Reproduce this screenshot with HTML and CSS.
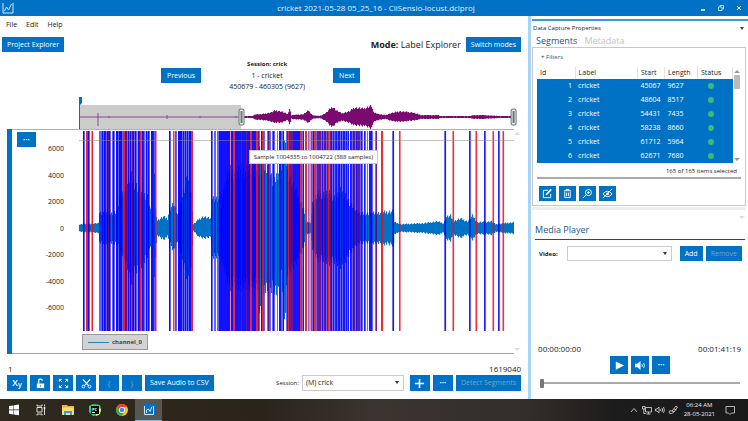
FILE: index.html
```html
<!DOCTYPE html>
<html lang="en">
<head>
<meta charset="utf-8">
<title>cricket 2021-05-28 05_25_16 - CliSensio-locust.dclproj</title>
<link rel="stylesheet" href="styles.css">
</head>
<body>

<header class="titlebar">
	<svg class="logo" viewBox="0 0 12 12"><path d="M1 1v10h10V1M2.5 9l2-4 2 3 3-6"/></svg>
	<h1>cricket 2021-05-28 05_25_16 - CliSensio-locust.dclproj</h1>
	<div class="window-buttons">
		<button aria-label="Minimize"><svg viewBox="0 0 8 8"><path d="M2 6h4" stroke-width="1.5"/></svg></button>
		<button aria-label="Restore"><svg viewBox="0 0 8 8"><path d="M1.5 3h3.5v3.5H1.5zM3 3V1.5h3.5V5H5" stroke-width=".7"/></svg></button>
		<button aria-label="Close"><svg viewBox="0 0 8 8"><path d="M2 2l4 4M6 2L2 6"/></svg></button>
	</div>
</header>

<div class="workspace">
	<main class="explorer">
		<nav class="menu">
			<button>File</button>
			<button>Edit</button>
			<button>Help</button>
		</nav>

		<div class="mode-row">
			<button class="btn">Project Explorer</button>
			<div class="mode"><b>Mode:</b> Label Explorer</div>
			<button class="btn">Switch modes</button>
		</div>

		<div class="session-row">
			<button class="btn">Previous</button>
			<div class="session-info">
				<b>Session: crick</b>
				<span>1 - cricket</span>
				<span>450679 - 460305 (9627)</span>
			</div>
			<button class="btn">Next</button>
		</div>

		<svg class="overview" viewBox="0 0 440 32" preserveAspectRatio="none">
			<rect class="dim" x="0" y="8" width="162" height="24"/>
			<path id="overviewWave"/>
			<path class="rest" d="M0 20h162M19 16v13M30 19v2M88 18v4M121 19v2M157 19v2"/>
			<path class="flag" d="M0 0h3v6l-2 2v24H0z"/>
			<g class="grip">
				<rect x="160" y="12" width="5" height="16" rx="2"/>
				<path d="M162 14v12M163 14v12"/>
				<rect x="432" y="12" width="5" height="16" rx="2"/>
				<path d="M434 14v12M435 14v12"/>
			</g>
		</svg>

		<section class="chart">
			<div class="channel"></div>
			<div class="axis-col">
				<button class="btn dots" aria-label="Chart options">•••</button>
				<div class="axis">
					<span>6000</span><span>4000</span><span>2000</span><span>0</span>
					<span>-2000</span><span>-4000</span><span>-6000</span>
				</div>
			</div>
			<div class="plot-col">
				<div class="plot">
					<svg viewBox="0 0 435 200" preserveAspectRatio="none">
						<path id="wave"/>
						<g id="bars"></g>
						<path class="limit" d="M0 9.5h435"/>
					</svg>
					<div class="tooltip">Sample 1004335 to 1004722 (388 samples)</div>
				</div>
				<div class="legend"><i></i>channel_0</div>
			</div>
			<div class="scroll-hints"><i class="tri up"></i><i class="tri"></i></div>
		</section>

		<div class="samples"><span>1</span><span>1619040</span></div>

		<div class="toolbar">
			<button class="btn icon xy" aria-label="Axes">X<small>y</small></button>
			<button class="btn icon" aria-label="Unlock"><svg viewBox="0 0 12 12"><path class="fill" d="M2 6h8v5H2z"/><path d="M4 6V3.5a2 2 0 0 1 4-.5" stroke-width="1.5"/><path d="M6 8v1.5" stroke="#0072c6"/></svg></button>
			<button class="btn icon" aria-label="Fit"><svg viewBox="0 0 12 12"><path d="M1.5 4V1.5H4M8 1.5h2.5V4M10.5 8v2.5H8M4 10.5H1.5V8M2 2l2.5 2.5M10 2L7.5 4.5M10 10L7.5 7.5M2 10l2.5-2.5"/></svg></button>
			<button class="btn icon" aria-label="Cut"><svg viewBox="0 0 12 12"><path d="M2 1.5l6.5 7M10 1.5l-6.5 7" stroke-width="1.3"/><circle cx="2.7" cy="9.3" r="1.5"/><circle cx="9.3" cy="9.3" r="1.5"/></svg></button>
			<button class="btn icon brace" disabled>{</button>
			<button class="btn icon brace" disabled>}</button>
			<button class="btn">Save Audio to CSV</button>
			<label class="session-label" for="session">Session:</label>
			<span class="select session-select"><select id="session"><option>(M) crick</option></select></span>
			<button class="btn icon" aria-label="Add session"><svg viewBox="0 0 12 12"><path d="M6 1v10M1 6h10" stroke-width="1.7"/></svg></button>
			<button class="btn icon dots" aria-label="More">•••</button>
			<button class="btn" disabled>Detect Segments</button>
		</div>
	</main>

	<aside class="dock">
		<div class="dock-title">Data Capture Properties<i class="tri dark"></i></div>
		<div class="tabs">
			<button class="active">Segments</button>
			<button>Metadata</button>
		</div>
		<section class="segments">
			<button class="filters"><b>+</b> Filters</button>
			<div class="table-wrap">
				<table>
					<colgroup><col class="c-id"><col><col class="c-start"><col class="c-length"><col class="c-status"></colgroup>
					<thead><tr><th>Id</th><th>Label</th><th>Start</th><th>Length</th><th>Status</th></tr></thead>
					<tbody>
						<tr><td>1</td><td>cricket</td><td>45067</td><td>9627</td><td><i class="ok"></i></td></tr>
						<tr><td>2</td><td>cricket</td><td>48604</td><td>8517</td><td><i class="ok"></i></td></tr>
						<tr><td>3</td><td>cricket</td><td>54431</td><td>7435</td><td><i class="ok"></i></td></tr>
						<tr><td>4</td><td>cricket</td><td>58238</td><td>8660</td><td><i class="ok"></i></td></tr>
						<tr><td>5</td><td>cricket</td><td>61712</td><td>5964</td><td><i class="ok"></i></td></tr>
						<tr><td>6</td><td>cricket</td><td>62671</td><td>7680</td><td><i class="ok"></i></td></tr>
					</tbody>
				</table>
				<div class="scrollbar"><i class="tri up"></i><i class="thumb"></i><i class="tri"></i></div>
			</div>
			<div class="count">165 of 165 items selected</div>
			<div class="actions">
				<button class="btn icon" aria-label="Edit"><svg viewBox="0 0 12 12"><path d="M9.5 6.5v4h-8v-8h5"/><path d="M4.5 7.5l5.5-6" stroke-width="1.8"/></svg></button>
				<button class="btn icon" aria-label="Delete"><svg viewBox="0 0 12 12"><path d="M2 3h8M4.5 3V1.5h3V3M3 4v6.5h6V4M5 5v4M7 5v4"/></svg></button>
				<button class="btn icon" aria-label="Zoom to segment"><svg viewBox="0 0 12 12"><circle cx="7" cy="5" r="3.3"/><path d="M4.5 7.5l-3.5 3.5M5.5 5h3M7 3.5v3"/></svg></button>
				<button class="btn icon" aria-label="Hide"><svg viewBox="0 0 12 12"><path d="M1 6.5q5-6 10 0q-5 6-10 0zM1 11L11 1"/><circle class="fill" cx="6" cy="6.5" r="1.5"/></svg></button>
			</div>
		</section>

		<div class="splitter"></div>
		<i class="tri panel-arrow"></i>

		<section class="player">
			<h2>Media Player</h2>
			<div class="video-row">
				<label for="video">Video:</label>
				<span class="select"><select id="video"><option></option></select></span>
				<button class="btn">Add</button>
				<button class="btn" disabled>Remove</button>
			</div>
			<div class="times"><span>00:00:00:00</span><span>00:01:41:19</span></div>
			<div class="transport">
				<button class="btn" aria-label="Play"><svg viewBox="0 0 12 12"><path class="fill" d="M2 1.5l9 4.5-9 4.5z"/></svg></button>
				<button class="btn" aria-label="Volume"><svg viewBox="0 0 12 12"><path class="fill" d="M0 4h2.5L6 1v10L2.5 8H0z"/><path d="M7.5 4.5q1 1.5 0 3M9.5 3.5q1.5 2.5 0 5"/></svg></button>
				<button class="btn dots" aria-label="More">•••</button>
			</div>
			<input class="seek" type="range" min="0" max="100" value="0" aria-label="Position">
		</section>
	</aside>
</div>

<footer class="taskbar">
	<button class="task" aria-label="Start"><svg viewBox="0 0 14 14"><path fill="#fff" d="M2 3l4.5-.6v4.2H2zM7 2.3l5-.7v5H7zM2 7.2h4.5v4.2L2 10.8zM7 7.2h5v5l-5-.7z"/></svg></button>
	<button class="task" aria-label="Task view"><svg viewBox="0 0 14 14"><path fill="none" stroke="#ddd" d="M3 4.5h5v4.5H3zM3 1.5v1.5h5V1.5M3 12.5V11h5v1.5M10.5 1.5v2M10.5 6v6"/><path fill="#fff" d="M9.7 4h1.6v2H9.7z"/></svg></button>
	<button class="task" aria-label="File Explorer"><svg viewBox="0 0 14 14"><path fill="#e8b339" d="M1 2h5l1 1h6v3H1z"/><path fill="#fbdc7b" d="M1 4.5h12v7.5H1z"/><path fill="#3f9bdc" d="M3 8h8v4H9V10H5v2H3z"/></svg></button>
	<button class="task" aria-label="PyCharm"><svg viewBox="0 0 14 14"><path fill="#21d789" d="M1 3l4-2 7 1 1 5-2 5-6 1-4-4z"/><path fill="#fcf84a" d="M9 4l4 2-1 5-4 2z"/><path fill="#07c3f2" d="M9 1l4 3-3 1z"/><path fill="#000" d="M3 3h8v8H3z"/><text x="4" y="7.5">PC</text><path fill="#fff" d="M4 9h3v1H4z"/></svg></button>
	<button class="task" aria-label="Chrome"><svg viewBox="0 0 14 14"><circle cx="7" cy="7" r="6" fill="#fbc116"/><path fill="#ea4335" d="M1.8 4A6 6 0 0 1 12.2 4L7 4.2 4.6 8.4z"/><path fill="#34a853" d="M1.8 4A6 6 0 0 0 6.5 13l3-4.6H4.5z"/><circle cx="7" cy="7" r="3" fill="#fff"/><circle cx="7" cy="7" r="2.3" fill="#4285f4"/></svg></button>
	<button class="task running" aria-label="CliSensio"><svg viewBox="0 0 14 14"><path fill="#0072c6" d="M1 1h12v12H1z"/><path fill="none" stroke="#cde6f7" d="M2.5 3v8.5h9V3M4.5 10V7l2-1 1.5 2.5 2-5"/></svg></button>
	<div class="tray">
		<svg viewBox="0 0 10 10"><path d="M2 7l3-3.5L8 7"/></svg>
		<svg viewBox="0 0 10 10"><path d="M3.5 2.5h6v4.5h-6zM4.5 9h4M6.5 7v2M.5 1.5h2.5v2.5H.5zM1.8 4v4.5h2"/></svg>
		<svg viewBox="0 0 10 10"><path d="M.5 4h1.5l2-2v6l-2-2H.5zM5.5 4q.7 1 0 2M7 3q1.2 2 0 4M8.5 2q1.7 3 0 6"/></svg>
		<svg viewBox="0 0 10 10"><path d="M4 6l4-5 1.5 1L6 7zM4 6q-3-1-3 1t2.5 1.5T6 6M6 4l2.5 1"/></svg>
		<time>06:24 AM<br>28-05-2021</time>
		<svg viewBox="0 0 10 10"><path d="M1 1.5h8.5v6.5H6.5L5 9.5 3.5 8H1z"/></svg>
	</div>
</footer>

<script src="script.js"></script>
</body>
</html>
```
FILE: styles.css
```css
* {
	box-sizing: border-box;
}
body {
	margin: 0;
	min-height: 100vh;
	display: flex;
	flex-direction: column;
	font: 7px/12px "Open Sans", "Noto Sans", sans-serif;
	color: #222;
	background: #fff;
}
button, select {
	font: inherit;
	color: inherit;
	border: 0;
	padding: 0;
	background: none;
}
svg {
	display: block;
	fill: none;
}

/* shared controls */
.btn {
	height: 15px;
	padding: 0 5px;
	background: #0072c6;
	color: #fff;
	font-weight: 500;
	white-space: nowrap;
	display: flex;
	align-items: center;
	justify-content: center;
}
.btn:disabled {
	color: #7aa3c6;
}
.btn svg {
	width: 11px;
	height: 11px;
	stroke: #fff;
}
.btn .fill {
	fill: #fff;
	stroke: none;
}
.btn.dots {
	font-size: 6px;
}
.select {
	display: flex;
	position: relative;
	height: 15px;
}
.select select {
	appearance: none;
	width: 100%;
	padding: 0 3px;
	border: 1px solid #ccc;
	background: #fff;
}
.select::after {
	content: "";
	position: absolute;
	right: 5px;
	top: 6px;
	border: 2px solid transparent;
	border-top: 3px solid #333;
	border-bottom: 0;
}
.tri {
	width: 0;
	height: 0;
	border: 3px solid transparent;
	border-top: 3px solid #ddd;
	border-bottom: 0;
}
.tri.up {
	border-top: 0;
	border-bottom: 3px solid #ddd;
}
.tri.dark {
	border-width: 3px 2px 0;
	border-top-color: #444;
}

/* title bar */
.titlebar {
	height: 16px;
	background: #0072c6;
	display: flex;
	align-items: center;
	justify-content: space-between;
	color: #fff;
}
.titlebar h1 {
	margin: 0;
	font-size: 8px;
	font-weight: 400;
	color: #e3eff9;
}
.logo {
	width: 12px;
	height: 12px;
	margin: 0 39px 0 2px;
	stroke: #d6e9f8;
}
.window-buttons {
	display: flex;
	gap: 10px;
	padding-right: 5px;
}
.window-buttons svg {
	width: 8px;
	height: 8px;
	stroke: #fff;
}

/* main area */
.workspace {
	flex: 1;
	display: flex;
}
.explorer {
	flex: 1;
	min-width: 0;
	display: flex;
	flex-direction: column;
	padding-right: 7px;
}
.menu {
	display: flex;
	gap: 9px;
	padding: 3px 6px 6px;
}
.mode-row {
	display: flex;
	align-items: center;
	gap: 5px;
	padding-left: 2px;
}
.mode {
	margin-left: auto;
	font-size: 9px;
}
.session-row {
	display: flex;
	align-items: center;
	padding: 7px 0 5px 161px;
}
.session-info {
	width: 132px;
	display: flex;
	flex-direction: column;
	align-items: center;
	line-height: 11px;
}
.session-info b {
	font-size: 6px;
}
.session-row .btn {
	padding: 0 6px;
}
.overview {
	width: calc(100% - 81px);
	height: 32px;
	margin-left: 79px;
}
.overview .dim {
	fill: #ccc;
}
#overviewWave {
	fill: #7b0a70;
}
.overview .rest {
	stroke: #8a4a88;
}
.overview .flag {
	fill: #0072c6;
}
.grip {
	fill: #e8ecec;
	stroke: #68777a;
}

/* chart */
.chart {
	flex: 1;
	display: flex;
	margin-left: 7px;
}
.channel {
	width: 5px;
	background: #0072c6;
}
.axis-col, .plot-col {
	border-top: 1px solid #9ab8cc;
	border-bottom: 1px solid #8ba9c4;
	display: flex;
	flex-direction: column;
}
.axis-col {
	width: 67px;
	padding: 2px 15px 39px 5px;
}
.axis-col .btn {
	width: 19px;
	padding: 0;
	align-self: flex-start;
}
.axis {
	flex: 1;
	margin-top: -4px;
	display: flex;
	flex-direction: column;
	justify-content: space-between;
	text-align: right;
}
.plot-col {
	flex: 1;
}
.plot {
	flex: 1;
	position: relative;
	display: flex;
	min-height: 100px;
	margin-top: 1px;
}
.plot > svg {
	flex: 1;
	width: 100%;
	min-width: 0;
	height: 100%;
}
#wave {
	fill: #0072c6;
}
.limit {
	stroke: #888;
	stroke-opacity: .5;
}
.bar-B { fill: #00f; fill-opacity: .96; }
.bar-b { fill: #1010f0; fill-opacity: .65; }
.bar-P { fill: #5a0090; fill-opacity: .95; }
.bar-R { fill: #e80c18; fill-opacity: .92; }
.bar-r { fill: #f01830; fill-opacity: .5; }
.tooltip {
	position: absolute;
	left: 39%;
	top: 19px;
	padding: 0 4px;
	background: #fff;
	border: 1px solid #ccc;
	font-size: 6px;
	white-space: nowrap;
}
.legend {
	align-self: flex-start;
	display: flex;
	align-items: center;
	gap: 3px;
	margin: 3px 0 3px 3px;
	padding: 1px 5px;
	border: 1px solid #999;
	background: #d3d3d3;
	font-size: 6px;
	font-weight: 700;
	color: #444;
}
.legend i {
	width: 21px;
	height: 1px;
	background: #1f83cc;
}
.scroll-hints {
	width: 7px;
	padding: 3px 0;
	display: flex;
	flex-direction: column;
	justify-content: space-between;
}
.samples {
	display: flex;
	justify-content: space-between;
	padding: 9px 0 0 8px;
	font-size: 8px;
}
.toolbar {
	display: flex;
	align-items: center;
	gap: 3px;
	padding: 0 0 8px 7px;
}
.toolbar .btn, .toolbar .select {
	height: 16px;
}
.toolbar .btn.icon {
	width: 20px;
	padding: 0;
}
.toolbar .xy {
	font-size: 9px;
	font-weight: 600;
}
.toolbar .brace {
	font-size: 8px;
}
.xy small {
	font-size: 7px;
	padding-top: 3px;
}
.session-label {
	margin-left: auto;
	font-size: 6px;
}
.session-select {
	width: 102px;
	margin-right: 3px;
}

/* right dock */
.dock {
	width: 29%;
	box-sizing: content-box;
	border-left: 3px solid #a5d5f7;
	display: flex;
	flex-direction: column;
}
.dock-title {
	margin: 3px 0 0 1px;
	padding: 1px 4px 0 1px;
	border-top: 2px solid #3a9bd6;
	font-size: 6px;
	display: flex;
	align-items: center;
	justify-content: space-between;
}
.tabs {
	display: flex;
	gap: 7px;
	padding-left: 5px;
	font-size: 9px;
	line-height: 13px;
	color: #c4c4c4;
}
.tabs .active {
	color: #1c5788;
}
.segments {
	margin: 0 2px 0 1px;
	padding: 3px 4px 4px;
	border: 1px solid #c8c8c8;
}
.filters {
	display: block;
	margin-left: 4px;
	font-size: 6px;
	color: #1c5788;
}
.table-wrap {
	display: flex;
	margin-top: 4px;
}
table {
	flex: 1;
	table-layout: fixed;
	width: 0;
	border-collapse: collapse;
}
.c-id { width: 38px; }
.c-start { width: 27px; }
.c-length { width: 33px; }
.c-status { width: 35px; }
th {
	height: 12px;
	padding: 0 3px;
	text-align: left;
	font-weight: 400;
	line-height: 12px;
	border-right: 1px solid #e3e3e3;
}
td {
	height: 14px;
	padding: 0 3px;
	background: #0072c6;
	color: #fff;
}
td:nth-child(1) {
	text-align: right;
}
.ok {
	display: block;
	width: 6px;
	height: 6px;
	margin-left: 7px;
	border-radius: 50%;
	background: #3cb878;
}
.scrollbar {
	width: 8px;
	display: flex;
	flex-direction: column;
	align-items: center;
	padding: 3px 0 2px;
}
.scrollbar .tri {
	border-top-color: #999;
	border-bottom-color: #999;
}
.scrollbar .thumb {
	width: 6px;
	height: 14px;
	margin: 2px 0 auto;
	background: #bbb;
}
.count {
	padding: 2px 4px 0 0;
	border-bottom: 2px solid #aaa;
	text-align: right;
	font-size: 6px;
}
.actions {
	display: flex;
	gap: 3px;
	padding: 7px 2px 0;
}
.actions .btn {
	width: 17px;
	padding: 0;
}
.splitter {
	height: 3px;
	margin: 1px 2px 0 1px;
	background: #eee;
}
.panel-arrow {
	margin: 6px 3px 4px auto;
}
.player {
	flex: 1;
	display: flex;
	flex-direction: column;
	padding: 0 3px 0 4px;
}
.player h2 {
	margin: 0 0 6px;
	padding-bottom: 3px;
	border-bottom: 1px solid #444;
	font-size: 9px;
	line-height: 13px;
	font-weight: 400;
	color: #1c5788;
}
.video-row {
	display: flex;
	align-items: center;
	gap: 3px;
	padding: 0 3px 0 4px;
}
.video-row label {
	font-size: 6px;
	font-weight: 700;
	margin-right: 6px;
}
.video-row .select {
	flex: 1;
	margin-right: 5px;
}
.times {
	display: flex;
	justify-content: space-between;
	margin-top: auto;
	padding: 0 4px 0 3px;
	font-size: 8px;
}
.transport {
	display: flex;
	justify-content: center;
	gap: 3px;
	padding: 1px 0 3px;
}
.transport .btn {
	width: 18px;
	height: 18px;
	padding: 0;
}
.seek {
	appearance: none;
	height: 12px;
	margin: 0 5px 10px;
	background: linear-gradient(#aaa, #aaa) center / 100% 2px no-repeat;
}
.seek::-webkit-slider-thumb {
	appearance: none;
	width: 4px;
	height: 9px;
	border-radius: 1px;
	background: #777;
}

/* taskbar */
.taskbar {
	height: 22px;
	display: flex;
	background: linear-gradient(90deg, #2f2a20, #2b241b 35%, #3b342f 50%, #332e2b 70%, #1d1c1c 82%, #191919);
}
.task {
	width: 27px;
	display: flex;
	align-items: center;
	justify-content: center;
}
.task svg {
	width: 14px;
	height: 14px;
}
.task text {
	fill: #fff;
	font-size: 4px;
	font-weight: 700;
}
.task.running {
	background: #595551;
	border-bottom: 1px solid #76b9ed;
}
.tray {
	margin-left: auto;
	display: flex;
	align-items: center;
	gap: 3px;
	padding-right: 13px;
	color: #eee;
}
.tray svg {
	width: 10px;
	height: 10px;
	stroke: #ddd;
	stroke-width: .8;
}
.tray time {
	font-size: 6px;
	line-height: 9px;
	text-align: center;
	margin: 0 7px 0 3px;
}
```
FILE: script.js
```js
'use strict'

// label bars: start column -> one letter per column (B/b blue, P purple, R/r red)
const BARS = {
	4: 'Bb.RRBb.rR',
	20: 'bbbBbBPbBPBb.bBb.BBbBBBbRRBPbBbBbPBbBbrBPRbBPbrBbBb.BBPbRr',
	90: 'Bb..brRb.BBBBbBbBbBbBBRR',
	132: 'Bb.bb.bbBBBBBBBBBBBrBBRRBBBBBBPBBBBPBBBRRBBBBRRPb.BRRb..bPRb.',
	193: 'bBb..b.BBbbB',
	207: 'bPRPPPPBBBBBBBRRbB.RR.brrRbBRRbPPPPbBbPBbPRbPBbBbPBbBBbBbBBbBbB.BPbBPbBPPPb',
	282: 'Bb.Bb.b.BBBb',
	296: 'bP',
	302: 'RR',
	313: 'bB',
	320: 'Rr',
	365: 'bB',
	373: 'rR',
	390: 'Bb',
	396: 'rR',
	405: 'Bb',
	413: 'rR',
	419: 'Bb',
	423: 'rR'
}

// envelopes: [x, height above, height below]
const WAVE = [
	[0, 4, 4], [19, 5, 5], [20, 17, 16], [30, 15, 16], [38, 18, 17], [40, 33, 20], [46, 42, 38], [51, 56, 56],
	[55, 48, 47], [62, 38, 42], [68, 34, 30], [72, 14, 14], [74, 14, 14], [75, 62, 56], [76, 20, 30], [78, 8, 8],
	[84, 12, 12], [88, 10, 9], [90, 20, 15], [94, 26, 24], [98, 14, 14], [104, 37, 38], [108, 53, 52],
	[112, 36, 40], [114, 4, 3], [119, 9, 9], [124, 12, 11], [131, 10, 9], [133, 32, 31], [140, 30, 29],
	[150, 60, 60], [179, 64, 62], [180, 88, 92], [182, 62, 60], [188, 70, 70], [194, 45, 60], [198, 60, 72],
	[202, 62, 45], [205, 92, 96], [208, 60, 50], [220, 30, 30], [224, 22, 22], [226, 6, 6], [231, 6, 6],
	[233, 26, 22], [238, 36, 33], [250, 36, 36], [256, 32, 36], [261, 39, 39], [266, 35, 35], [270, 26, 26],
	[280, 15, 15], [300, 16, 16], [313, 18, 18], [314, 17, 17], [315, 6, 6], [322, 4, 4], [344, 5, 5],
	[358, 7, 7], [364, 5, 5], [367, 12, 12], [371, 13, 13], [374, 7, 7], [381, 10, 10], [388, 7, 7],
	[393, 13, 12], [398, 6, 6], [412, 7, 7], [416, 4, 4], [434, 6, 6]
]
const OVERVIEW = [
	[162, 1, 1], [173, 1, 1], [176, 3, 3], [183, 3, 3], [192, 5, 5], [196, 7, 6], [202, 6, 6], [208, 3, 3],
	[210, 9, 8], [212, 2, 2], [224, 3, 3], [229, 7, 6], [233, 2, 2], [240, 1, 1], [246, 4, 4], [253, 11, 11],
	[257, 7, 6], [262, 4, 4], [270, 6, 6], [275, 10, 9], [284, 9, 9], [292, 12, 12], [294, 5, 5], [300, 3, 3],
	[306, 2, 2], [311, 4, 4], [320, 6, 5], [332, 5, 4], [342, 2, 2], [359, 2, 2], [360, 1, 1], [390, 1, 1],
	[394, 2, 2], [404, 2, 2], [420, 1, 1], [433, 1, 1]
]

const heightAt = function(points, x, side) {
	for (let i = 1; i < points.length; i++) {
		const a = points[i - 1]
		const b = points[i]
		if (x <= b[0]) {
			return a[side] + (b[side] - a[side]) * (x - a[0]) / (b[0] - a[0])
		}
	}
	return points[points.length - 1][side]
}

const makeWave = function(points, mid) {
	const start = points[0][0]
	const end = points[points.length - 1][0]
	let s = ''
	for (let x = start; x <= end; x++) {
		const rough = 0.8 + (x * 37 % 11) / 40
		const top = mid - heightAt(points, x, 1) * rough
		const bottom = mid + heightAt(points, x, 2) * rough
		s += 'M' + x + ' ' + top.toFixed(1) + 'h1.1V' + bottom.toFixed(1) + 'h-1.1z'
	}
	return s
}

const makeBars = function() {
	let s = ''
	for (let start in BARS) {
		const cols = BARS[start]
		for (let i = 0; i < cols.length; i++) {
			if (cols[i] == '.') continue
			s += '<rect class="bar-' + cols[i] + '" x="' + (Number(start) + i) + '" width="1" height="200"/>'
		}
	}
	return s
}

document.getElementById('wave').setAttribute('d', makeWave(WAVE, 97))
document.getElementById('overviewWave').setAttribute('d', makeWave(OVERVIEW, 20))
document.getElementById('bars').innerHTML = makeBars()
```
